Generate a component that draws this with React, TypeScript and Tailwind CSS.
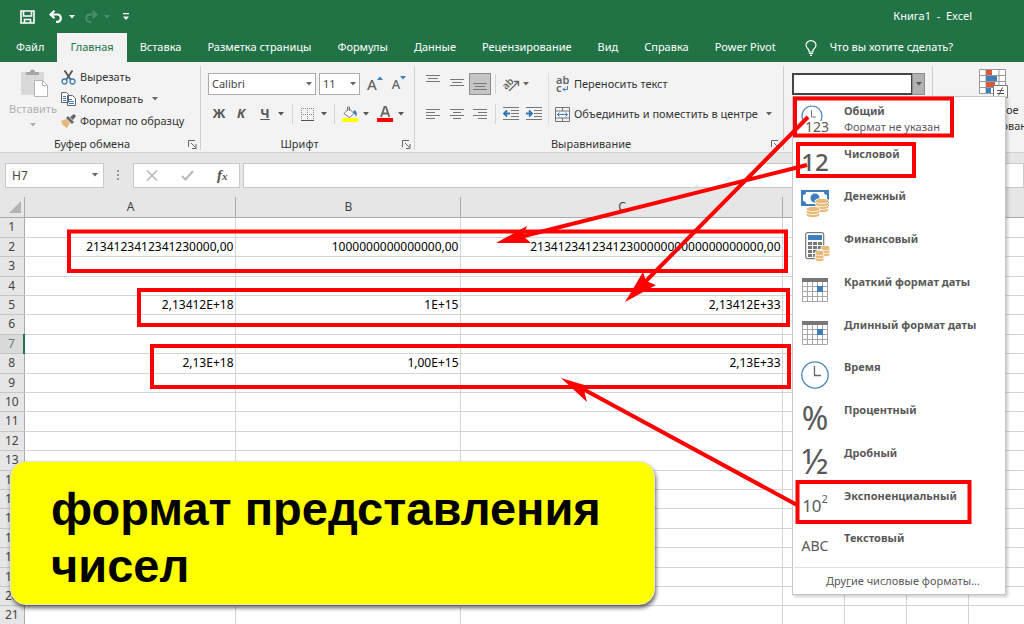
import type { ReactNode } from "react";
import clsx from "clsx";

const TABS = [
  "Файл",
  "Главная",
  "Вставка",
  "Разметка страницы",
  "Формулы",
  "Данные",
  "Рецензирование",
  "Вид",
  "Справка",
  "Power Pivot",
];

const ROWS = Array.from({ length: 21 }, (_, i) => i + 1);

const CELLS: Record<number, string[]> = {
  2: ["2134123412341230000,00", "1000000000000000,00", "2134123412341230000000000000000000,00"],
  5: ["2,13412E+18", "1E+15", "2,13412E+33"],
  8: ["2,13E+18", "1,00E+15", "2,13E+33"],
};

// ── Small shared pieces ──

function Caret({ className }: { className?: string }) {
  return (
    <svg width="6" height="4" viewBox="0 0 6 4" className={clsx("shrink-0", className)} fill="currentColor">
      <path d="M0 0h6L3 3.6z" />
    </svg>
  );
}

function Launcher() {
  return (
    <button aria-label="Параметры" className="text-[#666]">
      <svg width="9" height="9" viewBox="0 0 9 9" fill="none" stroke="currentColor">
        <path d="M.5 7V.5H7M3 3l4.5 4.5M8 4v4.5H4" />
      </svg>
    </button>
  );
}

function Group({ label, className, children }: { label: string; className?: string; children: ReactNode }) {
  return (
    <section className={clsx("flex shrink-0 flex-col border-r border-[#d0d0d0]", className)}>
      <div className="flex-1">{children}</div>
      <div className="flex h-3 items-center pl-1 pr-[3px] leading-3">
        <span className="flex-1 pr-2 text-center">{label}</span>
        <Launcher />
      </div>
    </section>
  );
}

function Lines({ widths, align, top = 2 }: { widths: number[]; align: "l" | "c" | "r"; top?: number }) {
  return (
    <svg width="14" height="14" viewBox="0 0 14 14" stroke="#777">
      {widths.map((w, i) => {
        const x = align === "l" ? 0 : align === "c" ? (14 - w) / 2 : 14 - w;
        const y = top + i * 3 + 0.5;
        return <path key={i} d={`M${x} ${y}h${w}`} />;
      })}
    </svg>
  );
}

function Indent({ out }: { out?: boolean }) {
  return (
    <svg width="16" height="14" viewBox="0 0 16 14" fill="none">
      <path d="M0 .5h16M8 3.5h8M8 6.5h8M8 9.5h8M0 12.5h16" stroke="#777" />
      <path d={out ? "M7 6.5H1M4 3.5L1 6.5l3 3" : "M0 6.5h6M3 3.5l3 3-3 3"} stroke="#2f75b5" strokeWidth="1.8" />
    </svg>
  );
}

function Divider() {
  return <span className="h-5 w-px shrink-0 bg-[#d4d4d4]" />;
}

// ── Number format icons ──

function GeneralIcon() {
  return (
    <svg width="28" height="28" viewBox="0 0 28 28" fill="none" className="overflow-visible">
      <circle cx="11" cy="11" r="10" stroke="#4a86bd" strokeWidth="1.2" />
      <path d="M10.5 5v7H15" stroke="#777" />
      <rect x="4" y="16" width="24" height="12" fill="#fff" />
      <text x="4" y="27" fontSize="14" fill="#595959">123</text>
    </svg>
  );
}

function Coins({ x, y, n, w = 13 }: { x: number; y: number; n: number; w?: number }) {
  return (
    <g stroke="#fff" strokeWidth=".8" fill="#e8b877">
      {Array.from({ length: n }, (_, i) => (
        <ellipse key={i} cx={x + w / 2} cy={y - i * 3} rx={w / 2} ry="2.6" />
      ))}
    </g>
  );
}

function MoneyIcon() {
  return (
    <svg width="28" height="28" viewBox="0 0 28 28">
      <rect width="28" height="16" fill="#3e7ebb" />
      <path d="M5 2h18a3 3 0 0 0 3 3v6a3 3 0 0 0-3 3H5a3 3 0 0 0-3-3V5a3 3 0 0 0 3-3z" fill="#fff" />
      <circle cx="14" cy="8" r="4.5" fill="#3e7ebb" />
      <Coins x={14} y={20} n={4} w={14} />
      <Coins x={5} y={25} n={3} w={14} />
    </svg>
  );
}

function CalcIcon() {
  return (
    <svg width="30" height="30" viewBox="0 0 30 30" className="shrink-0">
      <rect x="5.7" y=".7" width="18" height="26" rx="2" fill="#fff" stroke="#777" strokeWidth="1.2" />
      <rect x="8" y="3" width="14" height="5" fill="#3e7ebb" />
      {[10, 14, 18, 22].map((y) =>
        [8, 13, 18].map((x) => <rect key={`${x}-${y}`} x={x} y={y} width="4" height="3" fill="#777" />)
      )}
      <Coins x={21} y={22} n={3} w={9} />
      <Coins x={15} y={27} n={3} w={9} />
    </svg>
  );
}

function CalendarIcon() {
  return (
    <svg width="28" height="24" viewBox="0 0 28 24">
      <path d="M1.5 3v20.5h25V3M1 8.5h26M1 13.5h26M1 18.5h26M6.5 3v20M11.5 3v20M16.5 3v20M21.5 3v20" fill="none" stroke="#a6a6a6" />
      <path d="M1 0h26v4H1z" fill="#777" />
      <path d="M16 8h6v6h-6z" fill="#3e7ebb" />
    </svg>
  );
}

function ClockIcon() {
  return (
    <svg width="28" height="28" viewBox="0 0 28 28" fill="none">
      <circle cx="14" cy="14" r="13.2" stroke="#4a86bd" strokeWidth="1.3" />
      <path d="M13.5 5v9.5H20" stroke="#666" strokeWidth="1.3" />
    </svg>
  );
}

const FORMATS: { name: string; hint?: string; icon: ReactNode }[] = [
  { name: "Общий", hint: "Формат не указан", icon: <GeneralIcon /> },
  { name: "Числовой", icon: <span className="text-[24px] font-medium">12</span> },
  { name: "Денежный", icon: <MoneyIcon /> },
  { name: "Финансовый", icon: <CalcIcon /> },
  { name: "Краткий формат даты", icon: <CalendarIcon /> },
  { name: "Длинный формат даты", icon: <CalendarIcon /> },
  { name: "Время", icon: <ClockIcon /> },
  { name: "Процентный", icon: <span className="text-[32px]">%</span> },
  { name: "Дробный", icon: <span className="text-[34px]">½</span> },
  {
    name: "Экспоненциальный",
    icon: (
      <span className="flex items-start text-[17px]">
        <span className="pt-1">10</span>
        <span className="text-[11px]">2</span>
      </span>
    ),
  },
  { name: "Текстовый", icon: <span className="text-[14px]">ABC</span> },
];

function FormatMenu() {
  return (
    <div className="absolute left-0 top-full z-10 w-[214px] border border-[#c6c6c6] bg-white text-[#595959] shadow-[2px_2px_3px_rgba(0,0,0,0.2)]">
      <ul className="grid h-[470px] auto-rows-fr">
        {FORMATS.map((f) => (
          <li key={f.name}>
            <button className="flex h-full w-full items-start gap-[15px] pl-2 text-left">
              <span className="mt-2 flex h-7 w-7 shrink-0 items-center justify-center leading-none">{f.icon}</span>
              <span className="mt-[6px] leading-4">
                <b className="block font-bold">{f.name}</b>
                {f.hint && <span className="block">{f.hint}</span>}
              </span>
            </button>
          </li>
        ))}
      </ul>
      <button className="mx-auto block h-[27px] w-[210px] border-t border-[#e1e1e1] pl-2">
        Дру<u>г</u>ие числовые форматы...
      </button>
    </div>
  );
}

// ── Window header ──

function TitleBar() {
  return (
    <div className="flex h-[33px] items-center pl-5 pr-[52px] text-white">
      <button aria-label="Сохранить">
        <svg width="15" height="14" viewBox="0 0 15 14" fill="none" stroke="currentColor" strokeWidth="1.6">
          <path d="M1 1h13v12H1zM3.5 1v5h8V1M4.5 13V9.5h6V13" />
        </svg>
      </button>
      <button aria-label="Отменить" className="ml-[14px] flex items-center gap-[6px]">
        <svg width="14" height="13" viewBox="0 0 14 13" fill="none" stroke="currentColor" strokeWidth="2.2">
          <path d="M5.5.8L1.5 4.5l4 3.7M1.5 4.5h7.2a3.7 3.7 0 0 1 0 7.3H7" />
        </svg>
        <Caret />
      </button>
      <button aria-label="Повторить" className="ml-[9px] flex items-center gap-[6px] text-[#4c8f6b]">
        <svg width="14" height="13" viewBox="0 0 14 13" fill="none" stroke="currentColor" strokeWidth="1.8">
          <path d="M8.5.8l4 3.7-4 3.7M12.5 4.5H5.3a3.7 3.7 0 0 0 0 7.3H7" />
        </svg>
        <Caret />
      </button>
      <button aria-label="Настройка панели" className="ml-[13px]">
        <svg width="6" height="8" viewBox="0 0 6 8" fill="currentColor">
          <path d="M0 0h6v1.3H0zM0 3.5h6L3 7z" />
        </svg>
      </button>
      <span className="ml-auto whitespace-pre">Книга1  -  Excel</span>
    </div>
  );
}

function TabBar() {
  return (
    <nav className="flex h-[29px] pl-[3px] text-white">
      {TABS.map((t) => (
        <button
          key={t}
          className={clsx("shrink-0 whitespace-nowrap px-[13px]", t === "Главная" && "bg-[#f3f3f3] text-[#217346]")}
        >
          {t}
        </button>
      ))}
      <button className="ml-4 flex shrink-0 items-center gap-[13px] whitespace-nowrap">
        <svg width="12" height="16" viewBox="0 0 12 16" fill="none" stroke="currentColor" strokeWidth="1.2">
          <path d="M4 12V10C2.5 8.5 1 7.5 1 5.3a5 4.7 0 0 1 10 0C11 7.5 9.5 8.5 8 10v2zM4 13.5h4M5 15.3h2" />
        </svg>
        Что вы хотите сделать?
      </button>
    </nav>
  );
}

// ── Ribbon ──

function ClipboardGroup() {
  return (
    <Group label="Буфер обмена" className="w-[201px]">
      <div className="flex gap-1 pl-[9px]">
        <button className="flex w-[48px] flex-col items-center text-[#b0b0b0]">
          <svg width="30" height="31" viewBox="0 0 30 31" className="ml-1">
            <path d="M1 6h23v23H1z" fill="#d9d9d9" />
            <path d="M6 9V6h4a2.5 2.5 0 0 1 5 0h4v3z" fill="#a6a6a6" />
            <path d="M14.5 14.5h8l5 5v11h-13z" fill="#fff" stroke="#b5b5b5" />
            <path d="M22.5 14.5v5h5" fill="none" stroke="#b5b5b5" />
          </svg>
          <span className="mt-1 leading-4">Вставить</span>
          <Caret className="mt-[6px]" />
        </button>
        <div className="flex flex-col text-[#333]">
          <button className="flex h-[22px] items-center gap-1">
            <svg width="15" height="15" viewBox="0 0 15 15" fill="none">
              <path d="M3.5.5L10 10M11.5.5L5 10" stroke="#555" strokeWidth="1.8" />
              <circle cx="3.5" cy="11.5" r="2.5" stroke="#3e7ebb" strokeWidth="1.3" />
              <circle cx="11.5" cy="11.5" r="2.5" stroke="#3e7ebb" strokeWidth="1.3" />
            </svg>
            Вырезать
          </button>
          <button className="flex h-[22px] items-center gap-1">
            <svg width="15" height="14" viewBox="0 0 15 14" fill="#fff" stroke="#666">
              <path d="M.5.5h5l2 2v8h-7zM6.5 3.5h5l3 3v7h-8z" />
              <path d="M2 4.5h3M2 6.5h3M2 8.5h3M8 7.5h3M8 9.5h5M8 11.5h5" stroke="#3e7ebb" />
            </svg>
            Копировать
            <Caret className="ml-[5px] text-[#666]" />
          </button>
          <button className="flex h-[22px] items-center gap-1">
            <svg width="15" height="14" viewBox="0 0 15 14">
              <path d="M0 7l5-2 4 4-3 5c-2-1-5-3-6-7z" fill="#e8b877" />
              <path d="M5 4l2-2 6 6-2 2zM9 3l4-3 2 2-3 4z" fill="#666" />
            </svg>
            Формат по образцу
          </button>
        </div>
      </div>
    </Group>
  );
}

function FontGroup() {
  return (
    <Group label="Шрифт" className="w-[214px]">
      <div className="flex items-center gap-[3px] pl-[7px] pt-[7px]">
        <label className="relative flex items-center">
          <select aria-label="Шрифт" className="h-[22px] w-[108px] appearance-none border border-[#ababab] bg-white pl-[3px] text-[#444]">
            <option>Calibri</option>
          </select>
          <Caret className="pointer-events-none absolute right-1 text-[#666]" />
        </label>
        <label className="relative flex items-center">
          <select aria-label="Размер" className="h-[22px] w-[41px] appearance-none border border-[#ababab] bg-white pl-[3px] text-[#444]">
            <option>11</option>
          </select>
          <Caret className="pointer-events-none absolute right-1 text-[#666]" />
        </label>
        <button aria-label="Увеличить размер" className="ml-1 flex text-[#666]">
          <span className="text-[15px] font-medium leading-5">A</span>
          <Caret className="mt-[2px] rotate-180 text-[#3e7ebb]" />
        </button>
        <button aria-label="Уменьшить размер" className="ml-[6px] flex text-[#666]">
          <span className="text-[13px] font-medium leading-5">A</span>
          <Caret className="mt-[2px] text-[#3e7ebb]" />
        </button>
      </div>
      <div className="mt-2 flex h-[22px] items-center pl-[11px] text-[13px] font-bold text-[#555]">
        <button className="w-[14px]">Ж</button>
        <button className="ml-[9px] w-[12px] italic">К</button>
        <button className="ml-[13px] w-[10px] underline">Ч</button>
        <Caret className="ml-2" />
        <span className="ml-2 flex"><Divider /></span>
        <button aria-label="Границы" className="ml-2 flex items-center gap-[7px]">
          <svg width="13" height="13" viewBox="0 0 13 13" fill="none" stroke="#888">
            <path d="M.5 0v12M6.5 0v12M12.5 0v12M0 .5h13M0 6.5h13" strokeDasharray="1 1" />
            <path d="M0 12.5h13" stroke="#555" />
          </svg>
          <Caret />
        </button>
        <span className="ml-[7px] flex"><Divider /></span>
        <button aria-label="Цвет заливки" className="ml-[7px] flex items-center gap-[5px]">
          <svg width="16" height="16" viewBox="0 0 16 16" fill="none">
            <path d="M7 2.5l5 5-4.5 4-5.5-4zM5.5 5V1h2v4" fill="#fff" stroke="#777" />
            <path d="M12 4c3 1 3.500 4 2 7-.5-2-1-3-3-4z" fill="#3e7ebb" />
            <path d="M0 12h16v4H0z" fill="#ff0" />
          </svg>
          <Caret />
        </button>
        <button aria-label="Цвет текста" className="ml-2 flex items-center gap-[5px]">
          <svg width="16" height="16" viewBox="0 0 16 16">
            <path d="M4 11L7.5 1h1.4l3.5 10M5.5 7.500h5.500" fill="none" stroke="#666" strokeWidth="1.8" />
            <path d="M0 12h16v4H0z" fill="red" />
          </svg>
          <Caret />
        </button>
      </div>
    </Group>
  );
}

function AlignmentGroup() {
  return (
    <Group label="Выравнивание" className="w-[369px]">
      <div className="flex pt-[7px]">
        <div className="flex w-[133px] flex-col gap-2 pl-[6px]">
          <div className="flex h-[22px] items-center">
            <button aria-label="По верхнему краю" className="flex w-6 justify-center pb-2"><Lines widths={[14, 10, 14]} align="c" /></button>
            <button aria-label="По середине" className="flex w-6 justify-center"><Lines widths={[14, 10, 14]} align="c" /></button>
            <button aria-label="По нижнему краю" className="flex h-[22px] w-[22px] items-center justify-center border border-[#8c8c8c] bg-[#c5c5c5] pt-1">
              <Lines widths={[14, 10, 14]} align="c" top={4} />
            </button>
            <span className="ml-1 flex"><Divider /></span>
            <button aria-label="Ориентация" className="ml-[7px] flex items-center gap-1 text-[#666]">
              <svg width="16" height="15" viewBox="0 0 16 15" fill="none" stroke="currentColor" className="overflow-visible">
                <text x="-1" y="10" fontSize="10" fontWeight="600" stroke="none" fill="currentColor" transform="rotate(-45 5 7)">ab</text>
                <path d="M6 14L15 5M11 4.5h4.5V9" strokeWidth="1.3" />
              </svg>
              <Caret />
            </button>
          </div>
          <div className="flex h-[22px] items-center">
            <button aria-label="По левому краю" className="flex w-6 justify-center"><Lines widths={[14, 9, 14, 9]} align="l" /></button>
            <button aria-label="По центру" className="flex w-6 justify-center"><Lines widths={[14, 8, 14, 8]} align="c" /></button>
            <button aria-label="По правому краю" className="flex w-[22px] justify-center"><Lines widths={[14, 9, 14, 9]} align="r" /></button>
            <span className="ml-1 flex"><Divider /></span>
            <button aria-label="Уменьшить отступ" className="ml-[7px]"><Indent out /></button>
            <button aria-label="Увеличить отступ" className="ml-[7px]"><Indent /></button>
          </div>
        </div>
        <div className="flex flex-col gap-2 border-l border-[#dcdcdc] pl-[6px]">
          <button className="flex h-[22px] items-center gap-1">
            <span className="relative flex w-[15px] flex-col pl-px text-left text-[11px] font-semibold leading-[8px] text-[#666]">
              <span>ab</span>
              <span>c</span>
              <svg width="6" height="6" viewBox="0 0 6 6" fill="none" stroke="#3e7ebb" className="absolute bottom-0 right-[2px]">
                <path d="M5.5 0v3.5H1M3 1.5l-2 2 2 2" />
              </svg>
            </span>
            Переносить текст
          </button>
          <button className="flex h-[22px] items-center gap-1 whitespace-nowrap">
            <svg width="15" height="15" viewBox="0 0 15 15" fill="none" stroke="#777">
              <path d="M.5.5h14v14H.5zM0 4h15M0 11h15M7.5 0v4M7.5 11v4" />
              <path d="M2.5 7.5h10M4.5 5.5l-2 2 2 2M10.5 5.5l2 2-2 2" stroke="#3e7ebb" />
            </svg>
            Объединить и поместить в центре
            <Caret className="ml-1 text-[#666]" />
          </button>
        </div>
      </div>
    </Group>
  );
}

function NumberGroup() {
  return (
    <section className="w-[149px] shrink-0 border-r border-[#d0d0d0] pl-2 pt-[7px]">
      <div className="relative flex h-[23px]">
        <input aria-label="Числовой формат" className="h-[22px] w-[121px] border-2 border-[#444] bg-white px-1 outline-none" />
        <button aria-label="Открыть список" className="-ml-px flex h-[22px] w-[13px] items-center justify-center border border-[#8c8c8c] bg-[#b1b1b1] text-[#555]">
          <Caret />
        </button>
        <FormatMenu />
      </div>
    </section>
  );
}

function StylesGroup() {
  return (
    <section className="flex min-w-0 flex-1 justify-center overflow-hidden">
      <button className="flex w-[120px] shrink-0 flex-col items-center pl-[30px] pt-[3px] leading-4">
        <svg width="30" height="30" viewBox="0 0 30 30" className="shrink-0">
          <path d="M.5.5h26v24H.5zM0 6.5h27M0 12.5h27M0 18.5h27M7 0v24M20 0v24" fill="#fff" stroke="#999" />
          <path d="M7 1h6v5H7zM7 13h9v5H7z" fill="#d9593d" />
          <path d="M7 7h11v5H7zM7 19h5v5H7z" fill="#3e7ebb" />
          <path d="M14.5 16.5h14v12h-14z" fill="#fff" stroke="#777" />
          <path d="M18 21.5h7M18 24.5h7M23.5 18.5l-4 8" stroke="#555" fill="none" />
        </svg>
        <span className="mt-[3px]">Условное</span>
        <span>форматирование</span>
      </button>
    </section>
  );
}

function FormulaBar() {
  return (
    <div className="flex h-[45px] items-center border-t border-[#d0d0d0] bg-[#e6e6e6] pl-[5px]">
      <label className="relative flex items-center">
        <input aria-label="Имя" defaultValue="H7" className="h-[25px] w-[99px] border border-[#c8c8c8] bg-white pl-[6px] text-[12px] text-[#444]" />
        <Caret className="absolute right-[6px] text-[#666]" />
      </label>
      <svg width="3" height="11" viewBox="0 0 3 11" className="mx-[13px] shrink-0" fill="#999">
        <path d="M0 0h2v2H0zM0 4h2v2H0zM0 8h2v2H0z" />
      </svg>
      <div className="flex h-[25px] w-[107px] shrink-0 items-center border border-[#c8c8c8] bg-white pl-3 text-[#bbb]">
        <button aria-label="Отмена">
          <svg width="12" height="11" viewBox="0 0 12 11" stroke="currentColor" strokeWidth="1.6"><path d="M1 .5l10 10M11 .5l-10 10" /></svg>
        </button>
        <button aria-label="Ввод" className="ml-[23px]">
          <svg width="13" height="11" viewBox="0 0 13 11" fill="none" stroke="currentColor" strokeWidth="2.2"><path d="M1 6l3.5 3.5L12 1" /></svg>
        </button>
        <button className="ml-[23px] font-['Liberation_Serif',serif] text-[15px] font-bold italic leading-4 text-[#555]">
          f<span className="text-[11px]">x</span>
        </button>
      </div>
      <input aria-label="Строка формул" className="ml-[3px] h-[25px] min-w-0 flex-1 border border-[#c8c8c8] bg-white px-1" />
    </div>
  );
}

function Sheet() {
  return (
    <table className="w-full table-fixed border-collapse">
      <colgroup>
        <col className="w-[24px]" />
        <col className="w-[211px]" />
        <col className="w-[225px]" />
        <col className="w-[322px]" />
        <col className="w-[62px]" />
        <col className="w-[62px]" />
        <col className="w-[62px]" />
        <col />
      </colgroup>
      <thead>
        <tr className="h-[20px] bg-[#e6e6e6] text-[#444]">
          <th className="border-b border-r border-[#ababab] p-0">
            <svg width="12" height="12" viewBox="0 0 12 12" className="ml-auto mr-[3px]" fill="#b4b4b4"><path d="M12 0v12H0z" /></svg>
          </th>
          {["A", "B", "C", "", "", "", ""].map((c, i) => (
            <th key={i} className="border-b border-r border-[#ababab] p-0 pl-[2px] text-[12px] font-normal leading-4 last:border-r-0">{c}</th>
          ))}
        </tr>
      </thead>
      <tbody>
        {ROWS.map((r) => (
          <tr key={r} className={r % 5 === 1 || r % 5 === 3 ? "h-[20px]" : "h-[19px]"}>
            <th
              className={clsx(
                "border-b border-r border-b-[#c6c6c6] p-0 text-[12px] font-normal leading-4",
                r === 7 ? "border-r-2 border-r-[#217346] bg-[#dadada] text-[#5f7f6c]" : "border-r-[#ababab] bg-[#e6e6e6] text-[#444]"
              )}
            >
              {r}
            </th>
            {[0, 1, 2, 3, 4, 5, 6].map((c) => (
              <td key={c} className="border-b border-r border-[#d4d4d4] p-0 pr-px text-right text-[12px] leading-4 text-black last:border-r-0">
                {CELLS[r]?.[c]}
              </td>
            ))}
          </tr>
        ))}
      </tbody>
    </table>
  );
}

// Red boxes and arrows linking each format to its result
function Annotations() {
  return (
    <svg width="1024" height="624" viewBox="0 0 1024 624" className="pointer-events-none absolute left-0 top-0 z-20" fill="none" stroke="red" strokeWidth="4">
      <rect x="69" y="231.5" width="717" height="39.5" />
      <rect x="139" y="290" width="649" height="35" />
      <rect x="152" y="346" width="637" height="41" />
      <rect x="795" y="98.5" width="157" height="37" />
      <rect x="798" y="144" width="116" height="32" />
      <rect x="797.5" y="482" width="172" height="40" />
      <path d="M807 165L520 237M808 117L643 284M797 505L583 389" />
      <g fill="red" stroke="none">
        <path d="M496 243l31-17-4 10 8 7z" />
        <path d="M625 302l18-30 3 9 10 4z" />
        <path d="M561 378l30 9-7 3 3 12z" />
      </g>
    </svg>
  );
}

export default function App() {
  return (
    <div className="relative flex h-screen flex-col overflow-hidden bg-white font-['Noto_Sans',sans-serif] text-[11px] text-[#333]">
      <header className="shrink-0 bg-[#217346]">
        <TitleBar />
        <TabBar />
      </header>
      <div className="flex h-[90px] shrink-0 bg-[#f3f3f3] pb-[2px] pt-1">
        <ClipboardGroup />
        <FontGroup />
        <AlignmentGroup />
        <NumberGroup />
        <StylesGroup />
      </div>
      <FormulaBar />
      <main className="min-h-0 flex-1 overflow-hidden">
        <Sheet />
      </main>

      <Annotations />
      <aside className="absolute bottom-[19px] left-[10px] z-20 w-[645px] rounded-[16px] border border-[#e6e6c8] bg-[#ff0] pb-[10px] pl-10 pr-6 pt-[18px] shadow-[1px_3px_4px_rgba(0,0,0,0.6)]">
        <p className="font-['Liberation_Sans',Arial,sans-serif] text-[47px] font-bold leading-[57px] text-black">
          формат представления чисел
        </p>
      </aside>
    </div>
  );
}
